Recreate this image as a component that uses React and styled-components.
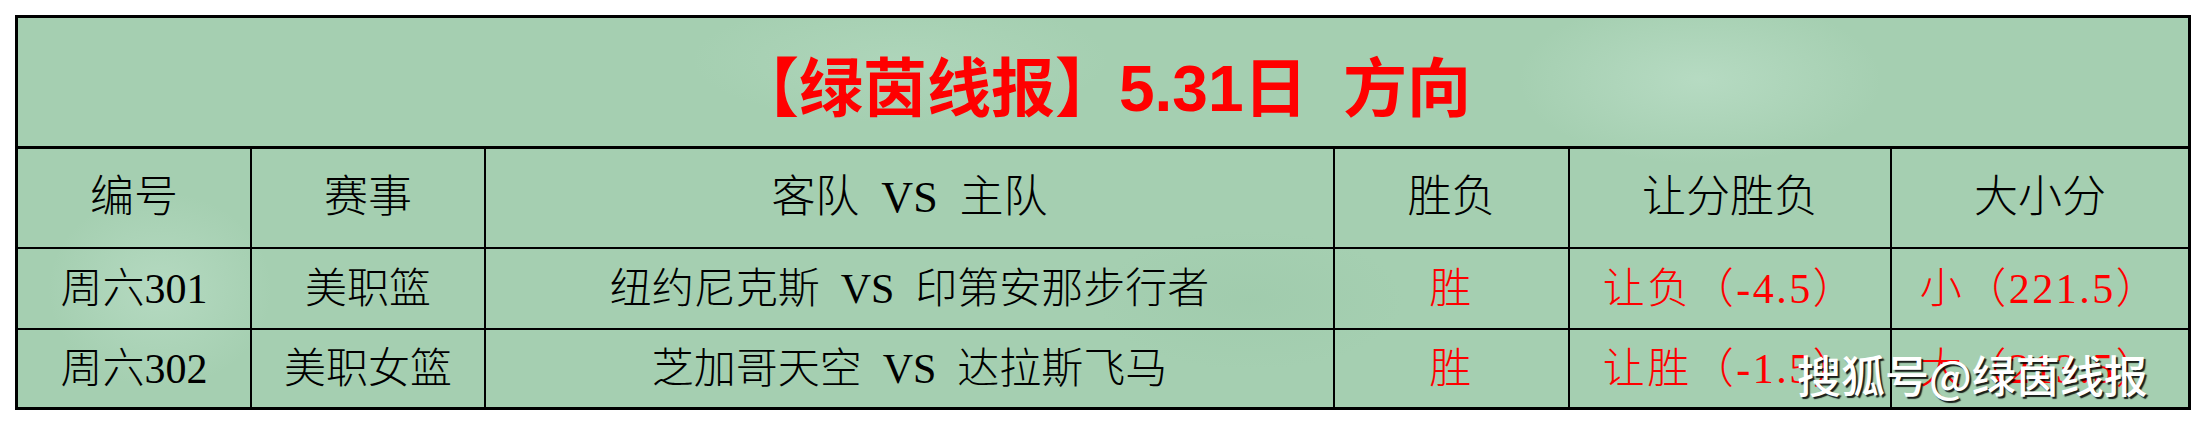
import React from "react";
import styled, { createGlobalStyle } from "styled-components";

const GlobalStyle = createGlobalStyle`
  html, body {
    margin: 0;
    padding: 0;
    background: #ffffff;
  }
`;

const Page = styled.div`
  position: relative;
  width: 2206px;
  height: 424px;
  padding: 15px;
  box-sizing: border-box;
`;

const Board = styled.div`
  display: grid;
  grid-template-columns: 232px 232px 847px 233px 320px 296px;
  grid-template-rows: 129px 98px 79px 77px;
  gap: 2px;
  width: 2176px;
  box-sizing: border-box;
  border: 3px solid #000;
  background: #000;
`;

const paper = `
  background-color: #a5cfb1;
  background-image:
    radial-gradient(ellipse 260px 120px at 1700px 80px, rgba(196, 228, 208, 0.55), transparent 70%),
    radial-gradient(ellipse 160px 140px at 160px 290px, rgba(196, 228, 208, 0.5), transparent 70%),
    radial-gradient(ellipse 300px 90px at 900px 60px, rgba(190, 224, 202, 0.35), transparent 70%),
    radial-gradient(ellipse 220px 100px at 1250px 300px, rgba(150, 196, 164, 0.3), transparent 70%);
  background-attachment: fixed;
`;

const TitleCell = styled.div`
  ${paper}
  grid-column: 1 / -1;
  margin-bottom: 1px;
  display: flex;
  align-items: center;
  justify-content: center;
  padding-top: 2px;
  box-sizing: border-box;
  color: #ff0000;
  font-family: "Liberation Sans", "Noto Sans CJK SC", sans-serif;
  font-weight: 700;
  font-size: 64px;
  white-space: pre;
`;

const Cell = styled.div`
  ${paper}
  display: flex;
  align-items: center;
  justify-content: center;
  font-family: "Liberation Serif", "Noto Sans CJK SC", serif;
  font-weight: 300;
  font-size: ${(p) => (p.$head ? "44px" : "42px")};
  letter-spacing: ${(p) => (p.$red ? "0.06em" : "0")};
  color: ${(p) => (p.$red ? "#ff0000" : "#000000")};
  white-space: pre;
  line-height: 1;
`;

const Watermark = styled.div`
  position: absolute;
  left: 1797px;
  top: 352px;
  font-family: "Noto Sans CJK SC", sans-serif;
  font-weight: 500;
  font-size: 44px;
  line-height: 1;
  color: #ffffff;
  text-shadow: 2px 2px 1px rgba(0, 0, 0, 0.85);
  white-space: nowrap;
`;

const header = ["编号", "赛事", "客队\u00a0\u00a0VS\u00a0\u00a0主队", "胜负", "让分胜负", "大小分"];

const rows = [
  ["周六301", "美职篮", "纽约尼克斯\u00a0\u00a0VS\u00a0\u00a0印第安那步行者", "胜", "让负（-4.5）", "小（221.5）"],
  ["周六302", "美职女篮", "芝加哥天空\u00a0\u00a0VS\u00a0\u00a0达拉斯飞马", "胜", "让胜（-1.5）", "大（213.5）"],
];

export default function App() {
  return (
    <Page>
      <GlobalStyle />
      <Board>
        <TitleCell>【绿茵线报】5.31日{"\u00a0\u00a0"}方向</TitleCell>
        {header.map((h) => (
          <Cell key={h} $head>{h}</Cell>
        ))}
        {rows.map((r) =>
          r.map((c, i) => (
            <Cell key={r[0] + i} $red={i >= 3}>{c}</Cell>
          ))
        )}
      </Board>
      <Watermark>搜狐号@绿茵线报</Watermark>
    </Page>
  );
}
